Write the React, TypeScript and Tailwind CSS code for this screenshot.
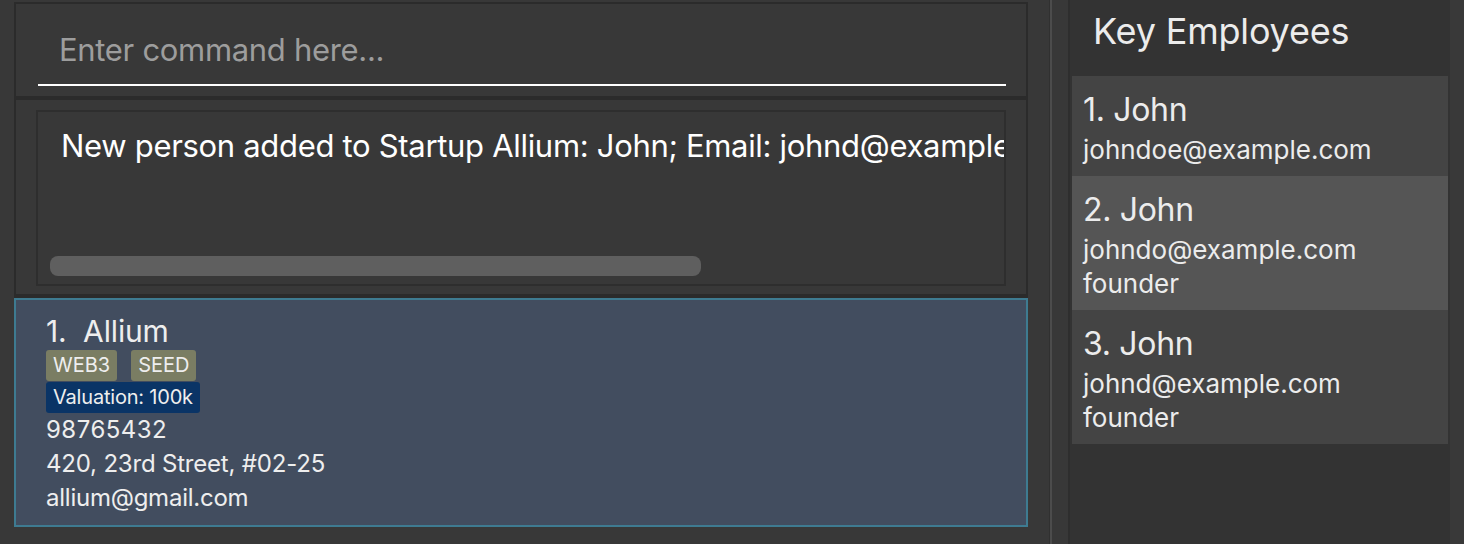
import React from "react";

const font = { fontFamily: "Inter, 'Noto Sans', sans-serif" };

function Employee({ n, email, role, selected }: { n: number; email: string; role?: string; selected?: boolean }) {
  return (
    <div className={`${selected ? "bg-[#555555]" : "bg-[#444444]"} pl-[11px] pt-[14px] pb-[9px] text-[#ececec]`}>
      <div className="text-[32px] leading-[40px] tracking-[-0.01em]">{n}. John</div>
      <div className="mt-[3px] text-[26px] leading-[34px]">{email}</div>
      {role && <div className="text-[26px] leading-[34px]">{role}</div>}
    </div>
  );
}

export default function App() {
  return (
    <div className="w-[1464px] h-[544px] flex bg-[#383838] overflow-hidden" style={font}>
      {/* Left */}
      <div className="w-[1028px] shrink-0 pl-[14px] pt-[2px] flex flex-col">
        <div className="h-[96px] border-2 border-[#2b2b2b] pl-[22px] pr-[20px] flex flex-col justify-end pb-[10px]">
          <div className="text-[31px] leading-[40px] text-[#9d9d9d] pl-[21px] tracking-[-0.01em] pb-[14px]">Enter command here...</div>
          <div className="h-[2px] bg-white" />
        </div>
        <div className="h-[200px] border-2 border-b-4 border-[#2b2b2b] pt-[10px] pl-[20px] pr-[20px]">
          <div className="h-[176px] border-2 border-[#2e2e2e] pl-[23px] relative overflow-hidden">
            <div className="whitespace-nowrap text-[31px] leading-[40px] text-white pt-[14px] tracking-[-0.01em] overflow-hidden">
              New person added to Startup Allium: John; Email: johnd@example.com
            </div>
            <div className="absolute left-[12px] top-[144px] w-[651px] h-[20px] rounded-[8px] bg-[#5f5f5f]" />
          </div>
        </div>
        <div className="h-[229px] border-2 border-[#3e7b91] bg-[#424d5f] pl-[30px] pt-[13px] text-[#eeeeee]">
          <div className="text-[30px] leading-[36px] tracking-[-0.005em]">1.&nbsp; Allium</div>
          <div className="flex gap-[14px] mt-px">
            <span className="h-[31px] px-[7px] rounded-[3px] bg-[#7a7d63] text-[20px] leading-[31px]">WEB3</span>
            <span className="h-[31px] px-[7px] rounded-[3px] bg-[#7a7d63] text-[20px] leading-[31px]">SEED</span>
          </div>
          <div className="flex mt-px">
            <span className="h-[31px] px-[7px] rounded-[3px] bg-[#0a3466] text-[20px] leading-[31px] tracking-[-0.01em]">Valuation: 100k</span>
          </div>
          <div className="text-[24px] leading-[34px] tracking-[0.02em]">98765432</div>
          <div className="text-[24px] leading-[34px] tracking-[-0.008em]">420, 23rd Street, #02-25</div>
          <div className="text-[24px] leading-[34px] tracking-[-0.01em]">allium@gmail.com</div>
        </div>
      </div>
      {/* Divider */}
      <div className="w-[21px] shrink-0" />
      <div className="w-px shrink-0 bg-[#303030]" />
      <div className="w-[2px] shrink-0 bg-[#4c4c4c]" />
      <div className="w-[16px] shrink-0" />
      <div className="w-[2px] shrink-0 bg-[#2e2e2e]" />
      {/* Right */}
      <div className="w-[380px] shrink-0 bg-[#333333] px-[2px]">
        <div className="h-[76px] pl-[21px] pt-[8px] text-[36px] leading-[46px] text-[#ececec] tracking-[-0.005em]">Key Employees</div>
        <Employee n={1} email="johndoe@example.com" />
        <Employee n={2} email="johndo@example.com" role="founder" selected />
        <Employee n={3} email="johnd@example.com" role="founder" />
      </div>
      <div className="flex-1 bg-[#393939]" />
    </div>
  );
}
